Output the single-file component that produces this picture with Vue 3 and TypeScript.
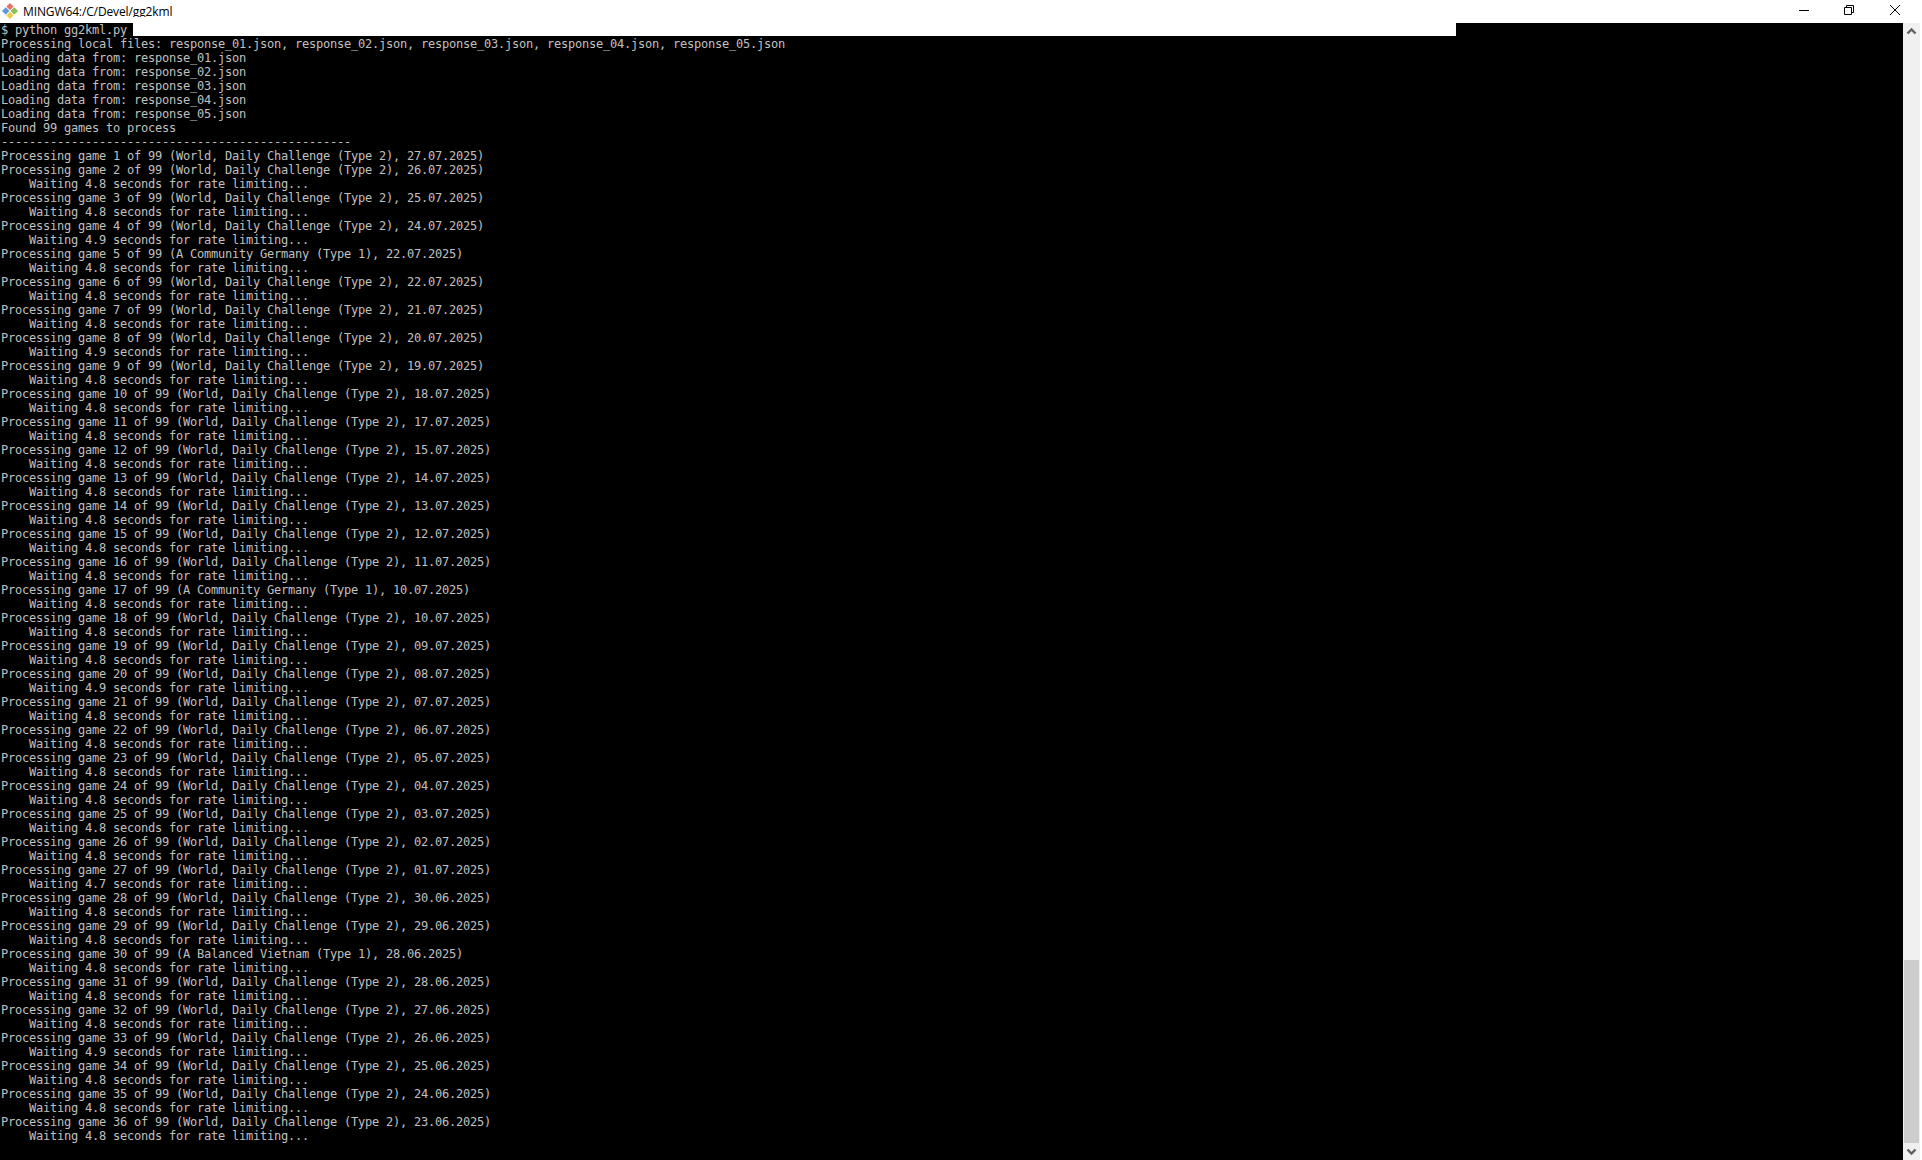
<script setup lang="ts">
type Game = [label: string, date: string, wait?: string]

const WORLD = 'World, Daily Challenge (Type 2)'
const GERMANY = 'A Community Germany (Type 1)'
const VIETNAM = 'A Balanced Vietnam (Type 1)'

const games: Game[] = [
  [WORLD, '27.07.2025'],
  [WORLD, '26.07.2025', '4.8'],
  [WORLD, '25.07.2025', '4.8'],
  [WORLD, '24.07.2025', '4.9'],
  [GERMANY, '22.07.2025', '4.8'],
  [WORLD, '22.07.2025', '4.8'],
  [WORLD, '21.07.2025', '4.8'],
  [WORLD, '20.07.2025', '4.9'],
  [WORLD, '19.07.2025', '4.8'],
  [WORLD, '18.07.2025', '4.8'],
  [WORLD, '17.07.2025', '4.8'],
  [WORLD, '15.07.2025', '4.8'],
  [WORLD, '14.07.2025', '4.8'],
  [WORLD, '13.07.2025', '4.8'],
  [WORLD, '12.07.2025', '4.8'],
  [WORLD, '11.07.2025', '4.8'],
  [GERMANY, '10.07.2025', '4.8'],
  [WORLD, '10.07.2025', '4.8'],
  [WORLD, '09.07.2025', '4.8'],
  [WORLD, '08.07.2025', '4.9'],
  [WORLD, '07.07.2025', '4.8'],
  [WORLD, '06.07.2025', '4.8'],
  [WORLD, '05.07.2025', '4.8'],
  [WORLD, '04.07.2025', '4.8'],
  [WORLD, '03.07.2025', '4.8'],
  [WORLD, '02.07.2025', '4.8'],
  [WORLD, '01.07.2025', '4.7'],
  [WORLD, '30.06.2025', '4.8'],
  [WORLD, '29.06.2025', '4.8'],
  [VIETNAM, '28.06.2025', '4.8'],
  [WORLD, '28.06.2025', '4.8'],
  [WORLD, '27.06.2025', '4.8'],
  [WORLD, '26.06.2025', '4.9'],
  [WORLD, '25.06.2025', '4.8'],
  [WORLD, '24.06.2025', '4.8'],
  [WORLD, '23.06.2025', '4.8'],
]

const files = ['01', '02', '03', '04', '05'].map((n) => `response_${n}.json`)

const lines: string[] = [
  `Processing local files: ${files.join(', ')}`,
  ...files.map((f) => `Loading data from: ${f}`),
  'Found 99 games to process',
  '-'.repeat(50),
]

games.forEach(([label, date, wait], i) => {
  lines.push(`Processing game ${i + 1} of 99 (${label}, ${date})`)
  if (wait) lines.push(`    Waiting ${wait} seconds for rate limiting...`)
})
</script>

<template>
  <div class="window">
    <header class="titlebar">
      <svg class="app-icon" width="18" height="18" viewBox="0 0 18 18" aria-hidden="true">
        <path d="M9 1 L12.6 4.6 L9 8.2 L5.4 4.6 Z" fill="#e4726b" />
        <path d="M13.2 5.2 L17 9 L13.2 12.8 L9.6 9 Z" fill="#8cc152" />
        <path d="M9 9.8 L12.6 13.4 L9 17 L5.4 13.4 Z" fill="#f0c94f" />
        <path d="M4.8 5.2 L8.4 9 L4.8 12.8 L1 9 Z" fill="#5d9ad8" />
      </svg>
      <span class="title">MINGW64:/C/Devel/gg2kml</span>
      <div class="controls">
        <button class="ctl" aria-label="Minimize">
          <svg width="10" height="10" viewBox="0 0 10 10"><path d="M0 5.5H10" stroke="#000" fill="none" /></svg>
        </button>
        <button class="ctl" aria-label="Restore">
          <svg width="10" height="10" viewBox="0 0 10 10"><path d="M0.5 2.5H7.5V9.5H0.5Z M2.5 2.5V0.5H9.5V7.5H7.5" stroke="#000" fill="none" /></svg>
        </button>
        <button class="ctl" aria-label="Close">
          <svg width="10" height="10" viewBox="0 0 10 10"><path d="M0 0L10 10M10 0L0 10" stroke="#000" fill="none" /></svg>
        </button>
      </div>
    </header>
    <main class="body">
      <div class="term">
        <div class="prompt">
          <span class="prompt-text">$ python gg2kml.py</span>
          <span class="selection"></span>
        </div>
        <div v-for="(line, i) in lines" :key="i" class="line">{{ line }}</div>
      </div>
      <aside class="scrollbar">
        <svg class="arrow" width="17" height="17" viewBox="0 0 17 17"><path d="M4.5 10.5L8.5 6.5L12.5 10.5" stroke="#606060" stroke-width="2.4" fill="none" /></svg>
        <div class="track"><div class="thumb"></div></div>
        <svg class="arrow" width="17" height="17" viewBox="0 0 17 17"><path d="M4.5 6.5L8.5 10.5L12.5 6.5" stroke="#606060" stroke-width="2.4" fill="none" /></svg>
      </aside>
    </main>
  </div>
</template>

<style scoped>
.window {
  width: 1922px;
  height: 1160px;
  display: flex;
  flex-direction: column;
  background: #fff;
  overflow: hidden;
}
.titlebar {
  height: 23px;
  flex: none;
  display: flex;
  align-items: flex-start;
  overflow: hidden;
}
.app-icon {
  margin: 2px 0 0 1px;
  flex: none;
}
.title {
  margin-left: 4px;
  height: 17px;
  overflow: hidden;
  font: 12px/23px "Open Sans", sans-serif;
  letter-spacing: -0.12px;
  color: #000;
}
.controls {
  margin-left: auto;
  padding-right: 4px;
  display: flex;
}
.ctl {
  width: 45px;
  height: 20px;
  padding: 0 1px 0 0;
  border: 0;
  background: transparent;
  display: flex;
  align-items: center;
  justify-content: center;
}
.ctl:last-child {
  margin-left: 1px;
}
.body {
  flex: 1;
  min-height: 0;
  display: flex;
  padding-right: 2px;
}
.term {
  flex: 1;
  min-width: 0;
  background: #000;
  color: #c0c0c0;
  font: 12px/14px "DejaVu Sans Mono", monospace;
  letter-spacing: -0.224px;
  padding-left: 1px;
  white-space: pre;
  overflow: hidden;
}
.prompt {
  display: flex;
  height: 14px;
}
.prompt-text {
  width: 132px;
  flex: none;
}
.selection {
  width: 1323px;
  height: 13px;
  background: #fff;
}
.line {
  height: 14px;
}
.scrollbar {
  width: 17px;
  flex: none;
  background: #f0f0f0;
  display: flex;
  flex-direction: column;
}
.arrow {
  flex: none;
}
.track {
  flex: 1;
  display: flex;
  flex-direction: column;
  justify-content: flex-end;
}
.thumb {
  height: 183px;
  margin: 0 1px;
  background: #cdcdcd;
}
</style>
